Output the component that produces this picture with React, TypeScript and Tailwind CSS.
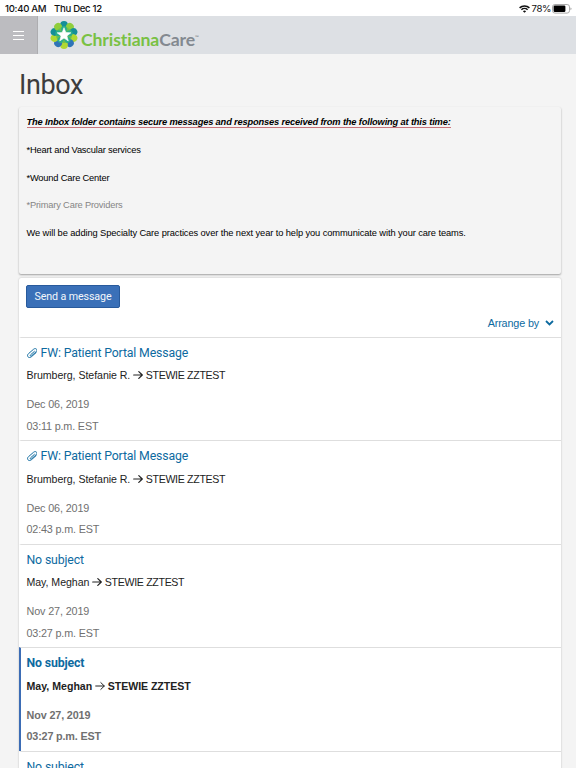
import React from 'react';

interface Message {
  subject: string;
  from: string;
  to: string;
  date: string;
  time: string;
  attachment?: boolean;
  unread?: boolean;
}

const messages: Message[] = [
  { subject: 'FW: Patient Portal Message', from: 'Brumberg, Stefanie R.', to: 'STEWIE ZZTEST', date: 'Dec 06, 2019', time: '03:11 p.m. EST', attachment: true },
  { subject: 'FW: Patient Portal Message', from: 'Brumberg, Stefanie R.', to: 'STEWIE ZZTEST', date: 'Dec 06, 2019', time: '02:43 p.m. EST', attachment: true },
  { subject: 'No subject', from: 'May, Meghan', to: 'STEWIE ZZTEST', date: 'Nov 27, 2019', time: '03:27 p.m. EST' },
  { subject: 'No subject', from: 'May, Meghan', to: 'STEWIE ZZTEST', date: 'Nov 27, 2019', time: '03:27 p.m. EST', unread: true },
  { subject: 'No subject', from: 'May, Meghan', to: 'STEWIE ZZTEST', date: 'Nov 27, 2019', time: '03:27 p.m. EST' },
];

// clockwise from the top
const petals = ['#158f98', '#8fce3c', '#158f98', '#b0d832', '#2f74b7', '#b0d832', '#2f74b7', '#b0d832', '#158f98', '#8fce3c'];

const LogoMark: React.FC = () => (
  <svg className="h-7 w-7 shrink-0" viewBox="-14 -14 28 28">
    <circle cx="0" cy="0" r="9.5" fill="#6cc24a" />
    {petals.map((color, index) => (
      <circle key={index} cx="0" cy="-10" r="3.9" fill={color} transform={`rotate(${index * 36})`} />
    ))}
    <circle cx="0" cy="0" r="8" fill="#6cc04f" />
    {[0, 72, 144, 216, 288].map((angle) => (
      <ellipse key={angle} cx="0" cy="-5.8" rx="2.9" ry="3.2" fill="#2aae8c" transform={`rotate(${angle})`} />
    ))}
    <path
      d="M0-7.3 1.8-2.4 6.9-2.2 2.9.9 4.3 5.9 0 3.1-4.3 5.9-2.9.9-6.9-2.2-1.8-2.4Z"
      fill="#fff"
      stroke="#fff"
      strokeWidth=".6"
      strokeLinejoin="round"
    />
  </svg>
);

const WifiIcon: React.FC = () => (
  <svg className="h-2 w-[11px]" viewBox="0 0 11 8" fill="none" stroke="#111" strokeWidth="1.5">
    <path d="M.6 2.9a7 7 0 0 1 9.8 0M2.4 4.8a4.4 4.4 0 0 1 6.2 0" />
    <path d="M5.5 7.8 3.9 6.2a2.3 2.3 0 0 1 3.2 0Z" fill="#111" stroke="none" />
  </svg>
);

const BatteryIcon: React.FC = () => (
  <svg className="h-[10px] w-5" viewBox="0 0 20 10">
    <rect x=".5" y=".5" width="17" height="8.6" rx="2.4" fill="#fff" stroke="#aaa" />
    <rect x="1.6" y="1.6" width="11.8" height="6.4" rx="1.2" fill="#000" />
    <path d="M18.4 3.4q1.2.4 1.2 1.4t-1.2 1.4Z" fill="#aaa" />
  </svg>
);

const ClipIcon: React.FC = () => (
  <svg className="mr-[3.5px] h-[10.5px] w-[10.5px]" viewBox="0 0 10 10" fill="none" stroke="#0d6a9f" strokeWidth=".9" strokeLinecap="round" strokeLinejoin="round">
    <path d="M6.9 3.1 3.5 6.6c-.8.8.2 1.7 1 .9l4-4.1c2-2-.6-4.2-2.5-2.3L1.5 5.6c-2.3 2.3.6 5.1 2.9 2.8l4.3-4.3" transform="rotate(4 5 5)" />
  </svg>
);

const ArrowIcon: React.FC<{ unread?: boolean }> = ({ unread }) => (
  <svg
    className="mr-[2.5px] ml-[3px] h-[10px] w-[10px]"
    viewBox="0 0 10 10"
    fill="none"
    stroke="#222"
    strokeWidth={unread ? '1' : '1.2'}
    strokeLinecap="round"
    strokeLinejoin="round"
  >
    <path d="M.7 5h8.5M5.8 1.6 9.3 5 5.8 8.4" />
  </svg>
);

const MessageRow: React.FC<Message> = ({ subject, from, to, date, time, attachment, unread }) => (
  <li
    className={`h-[103.4px] border-t border-l-2 border-t-[#dedede] pl-[5.5px] ${
      unread ? 'border-l-[#3b6cb5] font-bold' : 'border-l-transparent'
    }`}
  >
    <h2 className="mt-[7px] flex h-4 items-center font-['Roboto',sans-serif] text-[12.3px] leading-4 tracking-[-0.15px] text-[#0d6a9f]">
      {attachment && <ClipIcon />}
      {subject}
    </h2>
    <p className="mt-[6.4px] flex h-4 items-center text-[10.6px] leading-4 text-[#222]">
      <span className={unread ? '' : 'tracking-[-0.05px]'}>{from}</span>
      <ArrowIcon unread={unread} />
      <span className={unread ? 'tracking-[-0.05px]' : 'tracking-[-0.32px]'}>{to}</span>
    </p>
    <p className="mt-[13px] h-4 text-[10.8px] leading-4 tracking-[-0.13px] text-[#707070]">{date}</p>
    <p className="mt-[5.6px] h-4 text-[10.8px] leading-4 tracking-[-0.17px] text-[#707070]">{time}</p>
  </li>
);

const App: React.FC = () => {
  return (
    <div className="flex h-screen flex-col overflow-hidden bg-[#f4f4f4] font-['Liberation_Sans',sans-serif]">
      <div className="flex h-4 shrink-0 items-center bg-white pr-[4px] pl-[5px] font-['Inter',sans-serif] text-[9.6px] font-medium tracking-[-0.3px] text-[#111]">
        <span className="w-[49px] pt-[2px]">10:40 AM</span>
        <span className="pt-[2px]">Thu Dec 12</span>
        <div className="ml-auto flex items-center pt-[2px]">
          <WifiIcon />
          <span className="mr-[1px] ml-[2px] font-normal tracking-[-0.4px]">78%</span>
          <BatteryIcon />
        </div>
      </div>

      <header className="flex h-[38px] shrink-0 bg-[#dde0e4]">
        <button className="flex w-[38px] flex-col items-center justify-center gap-[3px] border-r border-[#adadb0] bg-[#bcbcc0]">
          <span className="h-px w-[11px] bg-white" />
          <span className="h-px w-[11px] bg-white" />
          <span className="h-px w-[11px] bg-white" />
        </button>
        <div className="flex items-center pl-3">
          <LogoMark />
          <div className="mt-[10px] ml-[3px] flex font-['Lato',sans-serif] text-[17.6px] leading-5 font-bold tracking-[-0.1px]">
            <span className="text-[#79c143]">Christiana</span>
            <span className="text-[#838990]">Care</span>
            <span className="text-[5px] leading-[14px] text-[#838990]">™</span>
          </div>
        </div>
      </header>

      <main className="pr-[15px] pl-[19px]">
        <h1 className="flex h-[53px] items-center pt-[9px] font-['Roboto',sans-serif] text-[27px] tracking-[-0.4px] text-[#3d3d3d]">Inbox</h1>

        <section className="flex h-[167px] flex-col gap-[13.8px] rounded-[2px] bg-[#f4f4f4] pt-2 pl-[7.5px] text-[9.3px] leading-[14px] tracking-[-0.095px] text-black shadow-[0_1px_2px_rgba(0,0,0,0.35)]">
          <p className="font-bold tracking-[-0.16px] italic">
            <span className="border-b border-[#c9757c]">
              The Inbox folder contains secure messages and responses received from the following at this time:
            </span>
          </p>
          <p className="tracking-[-0.18px]">*Heart and Vascular services</p>
          <p className="tracking-[-0.18px]">*Wound Care Center</p>
          <p className="tracking-[-0.18px] text-[#858585]">*Primary Care Providers</p>
          <p>We will be adding Specialty Care practices over the next year to help you communicate with your care teams.</p>
        </section>

        <section className="mt-1 rounded-[2px] bg-white shadow-[0_0_2px_rgba(0,0,0,0.25)]">
          <div className="h-[59px] pt-[7px]">
            <button className="ml-[7px] flex h-[23px] w-[94px] items-center justify-center rounded-[2px] border border-[#285a9c] bg-[#3a70b8] pt-px font-['Roboto',sans-serif] text-[10.7px] tracking-[-0.12px] text-[#f2f6fb]">
              Send a message
            </button>
            <button className="mt-[7px] mr-[7px] ml-auto flex h-4 items-center text-[10.8px] tracking-[-0.15px] text-[#0d6a9f]">
              Arrange by
              <svg className="ml-[6px] h-[6px] w-[9px]" viewBox="0 0 9 6" fill="none" stroke="#0d6a9f" strokeWidth="1.8">
                <path d="M1 1 4.5 4.4 8 1" />
              </svg>
            </button>
          </div>
          <ul>
            {messages.map((message, index) => (
              <MessageRow key={index} {...message} />
            ))}
          </ul>
        </section>
      </main>
    </div>
  );
};

export default App;
